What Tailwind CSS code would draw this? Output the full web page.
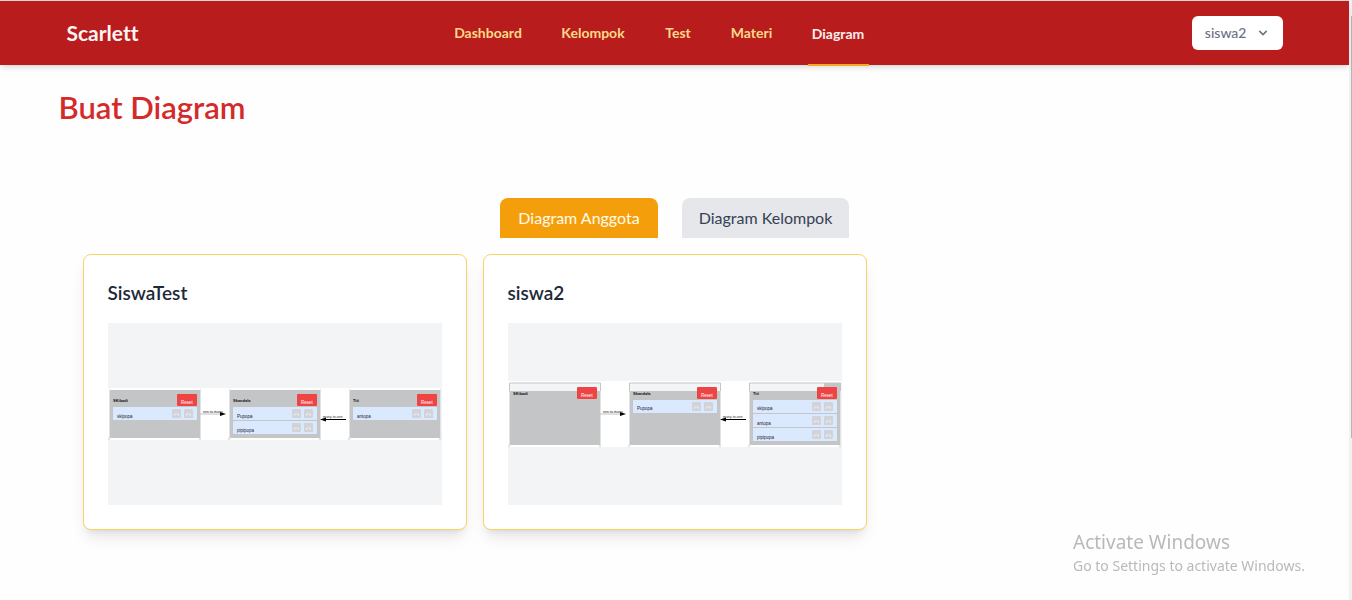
<!DOCTYPE html>
<html lang="id">
<head>
<meta charset="utf-8">
<meta name="viewport" content="width=device-width, initial-scale=1">
<title>Scarlett - Buat Diagram</title>
<script src="https://cdn.jsdelivr.net/npm/@tailwindcss/browser@4"></script>
</head>
<body class="flex min-h-screen bg-[#fefefe] font-['Lato','Liberation_Sans',sans-serif] text-gray-800 [font-variant-ligatures:none]">
<div class="min-w-0 flex-1">
  <header class="relative border-t border-[#ecd0d0] bg-[#b91c1c] shadow-md">
    <div class="mx-auto flex h-16 max-w-7xl items-center px-8">
      <div class="w-96"><a href="#" class="text-[21px] font-bold text-[#fff5f5]">Scarlett</a></div>
      <nav class="flex h-full gap-8 text-sm leading-5 font-bold text-[#fcd989]">
        <a href="#" class="flex w-[75px] items-center justify-center border-b-2 border-transparent pt-0.5">Dashboard</a>
        <a href="#" class="flex w-[71px] items-center justify-center border-b-2 border-transparent pt-0.5">Kelompok</a>
        <a href="#" class="flex w-[35px] items-center justify-center border-b-2 border-transparent pt-0.5">Test</a>
        <a href="#" class="flex w-[48px] items-center justify-center border-b-2 border-transparent pt-0.5">Materi</a>
        <a href="#" class="-mb-px flex w-[61px] items-center justify-center border-b-2 border-[#f9a825] pt-0.5 text-[#fdeeee]" aria-current="page">Diagram</a>
      </nav>
      <button type="button" class="ml-auto flex items-center gap-2 rounded-md bg-white py-[7px] pr-3 pl-[13px] text-sm leading-5 font-medium text-gray-500" aria-haspopup="menu">
        <span>siswa2</span>
        <svg class="size-4" viewBox="0 0 20 20" fill="currentColor" aria-hidden="true"><path fill-rule="evenodd" d="M5.293 7.293a1 1 0 011.414 0L10 10.586l3.293-3.293a1 1 0 111.414 1.414l-4 4a1 1 0 01-1.414 0l-4-4a1 1 0 010-1.414z" clip-rule="evenodd"/></svg>
      </button>
    </div>
  </header>

  <main class="mx-auto max-w-7xl px-6 pt-6">
    <h1 class="text-[31px] leading-9 font-semibold text-[#d42a2a]">Buat Diagram</h1>
    <div class="mt-[73px] flex justify-center gap-6 text-base leading-6" role="tablist">
      <button type="button" role="tab" aria-selected="true" class="w-[158px] rounded-t-lg bg-[#f59e0b] py-2 text-[#fffbeb]">Diagram Anggota</button>
      <button type="button" role="tab" aria-selected="false" class="w-[167px] rounded-t-lg bg-gray-200 py-2 text-gray-700">Diagram Kelompok</button>
    </div>

    <div class="mt-4 grid grid-cols-3 gap-4 px-6">
      <article class="rounded-lg border border-[#f5d565] bg-white p-6 shadow-lg">
        <h2 class="mb-4 text-[19px] leading-7 font-semibold">SiswaTest</h2>
        <svg class="block w-full bg-gray-100" viewBox="0 0 334 182" font-family="Liberation Sans, sans-serif" font-size="4.500" role="img" aria-label="Diagram SiswaTest">
          <defs>
            <g id="reset"><rect width="20" height="12" rx="1" fill="#ef4444"/><text x="10" y="10" font-size="4.500" text-anchor="middle" fill="#fff">Reset</text></g>
            <g id="item"><rect width="84" height="13" rx=".5" fill="#dbe9fe"/><rect x="59" y="2" width="9" height="9" rx="1" fill="#d1d3d8"/><rect x="71" y="2" width="9" height="9" rx="1" fill="#d1d3d8"/><path d="M61.500 9v-2h4v2M73.500 9v-2h4v2" fill="none" stroke="#e8eaed"/></g>
            <g id="corners" fill="#fff" stroke="#bbb" stroke-width=".4"><circle r=".9"/><circle cx="91" r=".9"/></g>
            <g id="arrows"><path d="M92 91h20" stroke="#aaa" stroke-width=".7"/><path d="M112 89l6 2-6 2z" fill="#000"/><text x="95" y="90" font-size="3.500" fill="#222">one-to-many</text></g>
            <g id="back"><path d="M217 96.500h21" stroke="#000"/><path d="M218 94.500l-6 2 6 2z" fill="#000"/><text x="215" y="95" font-size="3.500" fill="#333">many-to-one</text></g>
          </defs>
          <rect y="65" width="333" height="52" fill="#fff"/>
          <g fill="#c4c5c7"><rect x="2" y="67" width="90" height="48"/><rect x="122" y="67" width="90" height="48"/><rect x="242" y="67" width="90" height="48"/></g>
          <path d="M1.500 66v50M92.500 66v50M121.500 66v50M212.500 66v50M241.500 66v50M332.500 66v50" stroke="#e2e3e5" stroke-width="1"/>
          <use href="#corners" x="1" y="116"/><use href="#corners" x="121" y="116"/><use href="#corners" x="241" y="116"/>
          <g font-size="4" font-weight="bold" fill="#111"><text x="5" y="79">SKibadi</text><text x="125" y="79">Skandala</text><text x="245" y="79">Titi</text></g>
          <use href="#reset" x="69" y="71"/><use href="#reset" x="189" y="71"/><use href="#reset" x="309" y="71"/>
          <use href="#item" x="5" y="84"/><use href="#item" x="125" y="84"/><use href="#item" x="125" y="98"/><use href="#item" x="245" y="84"/>
          <g fill="#223"><text x="9" y="95">skipopa</text><text x="129" y="95">Pupopa</text><text x="129" y="109">pipipopa</text><text x="249" y="95">antopa</text></g>
          <use href="#arrows"/><use href="#back"/>
        </svg>
      </article>

      <article class="rounded-lg border border-[#f5d565] bg-white p-6 shadow-lg">
        <h2 class="mb-4 text-[19px] leading-7 font-semibold">siswa2</h2>
        <svg class="block w-full bg-gray-100" viewBox="0 0 334 182" font-family="Liberation Sans, sans-serif" font-size="4.500" role="img" aria-label="Diagram siswa2">
          <rect y="58" width="333" height="66" fill="#fff"/>
          <g fill="#f3f4f6" stroke="#c4c5c7" stroke-width="1"><path d="M1.500 68v-8h91v8M121.500 68v-8h91v8M241.500 68v-8h91v8"/></g>
          <g fill="#c4c5c7"><rect x="2" y="68" width="90" height="54"/><rect x="122" y="68" width="90" height="54"/><rect x="242" y="68" width="90" height="54"/><rect x="316" y="60" width="16" height="9"/></g>
          <path d="M1.500 68v54M92.500 68v54M121.500 68v54M212.500 68v54M241.500 68v54M332.500 68v54" stroke="#e2e3e5"/>
          <use href="#corners" x="1" y="123"/><use href="#corners" x="121" y="123"/><use href="#corners" x="241" y="123"/>
          <g font-size="4" font-weight="bold" fill="#111"><text x="5" y="72">SKibadi</text><text x="125" y="72">Skandala</text><text x="245" y="72">Titi</text></g>
          <use href="#reset" x="69" y="64"/><use href="#reset" x="189" y="64"/><use href="#reset" x="309" y="64"/>
          <use href="#item" x="125" y="77"/><use href="#item" x="245" y="77"/><use href="#item" x="245" y="91"/><use href="#item" x="245" y="105"/>
          <g fill="#223"><text x="129" y="87">Pupopa</text><text x="249" y="87">skipopa</text><text x="249" y="102">antopa</text><text x="249" y="116">pipipopa</text></g>
          <use href="#arrows"/><use href="#back"/>
        </svg>
      </article>
    </div>
  </main>
</div>

<!-- Scrollbar track and thumb -->
<div class="flex w-[3px] justify-end bg-[#f1f1f1] pt-4" aria-hidden="true"><div class="h-[422px] w-px bg-[#b5b5b5]"></div></div>

<!-- System watermark over the page -->
<aside class="fixed right-[43px] bottom-6 w-[236px] font-['Noto_Sans','Open_Sans',sans-serif] whitespace-nowrap text-[#b9b9b9]">
  <p class="text-[19px] leading-7">Activate Windows</p>
  <p class="text-sm leading-5">Go to Settings to activate Windows.</p>
</aside>
</body>
</html>
